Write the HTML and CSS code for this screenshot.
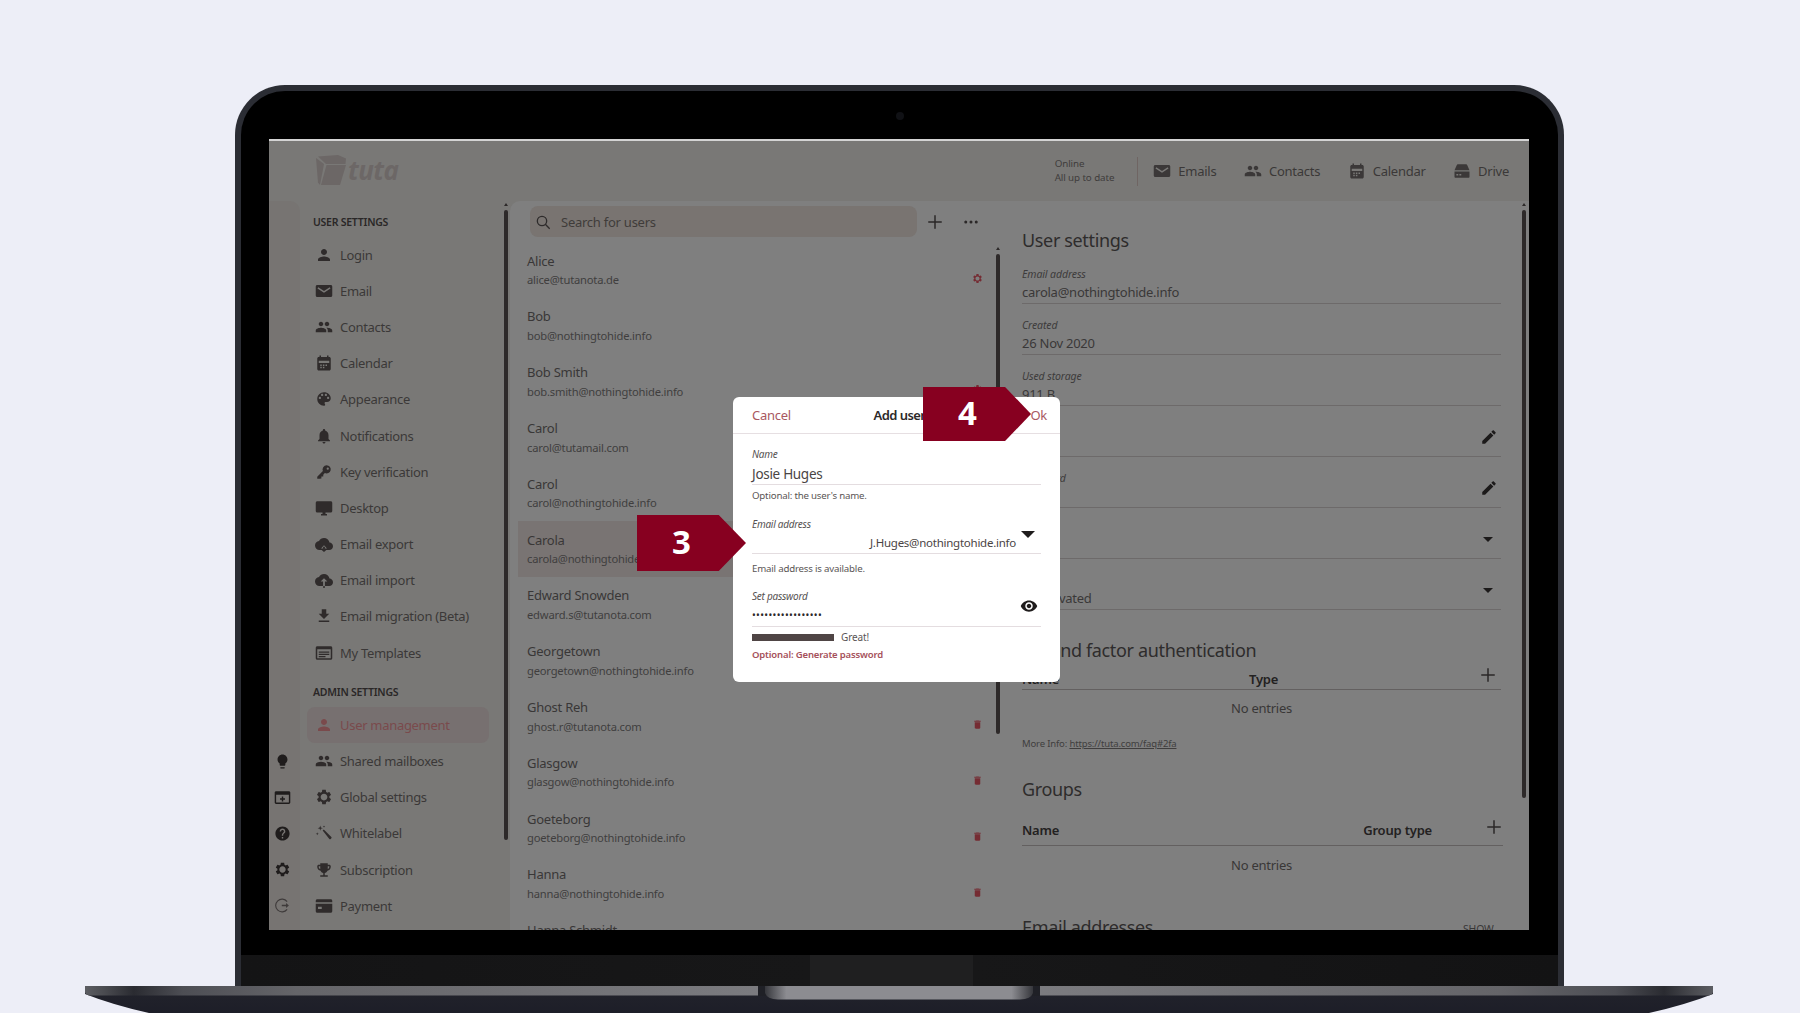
FILE: index.html
```html
<!DOCTYPE html>
<html lang="en">
<head>
<meta charset="utf-8">
<title>Tuta user settings</title>
<link rel="stylesheet" href="styles.css">
</head>
<body>
<svg class="sprites" width="0" height="0" aria-hidden="true">
  <symbol id="i-person" viewBox="0 0 24 24"><path d="M12 12c2.21 0 4-1.79 4-4s-1.79-4-4-4-4 1.79-4 4 1.79 4 4 4zm0 2c-2.67 0-8 1.34-8 4v2h16v-2c0-2.66-5.33-4-8-4z"/></symbol>
  <symbol id="i-mail" viewBox="0 0 24 24"><path fill-rule="evenodd" d="M3 4h18c1.1 0 2 .9 2 2v12c0 1.1-.9 2-2 2H3c-1.1 0-2-.9-2-2V6c0-1.1.9-2 2-2zm1.4 3L3.300 8.500 12 14.300l8.700-5.800L19.600 7 12 12z"/></symbol>
  <symbol id="i-people" viewBox="0 0 24 24"><path d="M16 11c1.66 0 2.99-1.34 2.99-3S17.66 5 16 5c-1.66 0-3 1.34-3 3s1.34 3 3 3zm-8 0c1.66 0 2.99-1.34 2.99-3S9.66 5 8 5C6.34 5 5 6.34 5 8s1.34 3 3 3zm0 2c-2.33 0-7 1.17-7 3.500V19h14v-2.500c0-2.330-4.670-3.500-7-3.500zm8 0c-.29 0-.62.02-.97.05 1.160.840 1.970 1.970 1.970 3.450V19h6v-2.500c0-2.330-4.670-3.500-7-3.500z"/></symbol>
  <symbol id="i-calendar" viewBox="0 0 24 24"><path fill-rule="evenodd" d="M6 2h2v2h8V2h2v2h1c1.100 0 2 .9 2 2v14c0 1.100-.9 2-2 2H5c-1.100 0-2-.9-2-2V6c0-1.100.9-2 2-2h1zM5 9v3h14V9zm2 5v2h2v-2zm3.500 0v2h2v-2zm3.500 0v2h2v-2zm-7 3v2h2v-2zm3.500 0v2h2v-2z"/></symbol>
  <symbol id="i-palette" viewBox="0 0 24 24"><path d="M12 3c-4.970 0-9 4.030-9 9s4.030 9 9 9c.83 0 1.500-.67 1.500-1.500 0-.39-.15-.74-.39-1.010-.23-.26-.38-.61-.38-.99 0-.83.67-1.500 1.500-1.500H16c2.760 0 5-2.240 5-5 0-4.420-4.030-8-9-8zm-5.500 9c-.83 0-1.500-.67-1.500-1.500S5.670 9 6.500 9 8 9.670 8 10.500 7.330 12 6.500 12zm3-4C8.670 8 8 7.330 8 6.500S8.670 5 9.500 5s1.500.67 1.500 1.500S10.330 8 9.500 8zm5 0c-.83 0-1.500-.67-1.500-1.500S13.670 5 14.500 5s1.500.67 1.500 1.500S15.330 8 14.500 8zm3 4c-.83 0-1.500-.67-1.500-1.500S16.670 9 17.500 9s1.500.67 1.500 1.500-.67 1.500-1.500 1.500z"/></symbol>
  <symbol id="i-bell" viewBox="0 0 24 24"><path d="M12 22c1.100 0 2-.9 2-2h-4c0 1.100.9 2 2 2zm6-6v-5c0-3.070-1.630-5.640-4.500-6.320V4c0-.83-.67-1.500-1.500-1.500s-1.500.67-1.500 1.500v.68C7.640 5.360 6 7.920 6 11v5l-2 2v1h16v-1l-2-2z"/></symbol>
  <symbol id="i-key" viewBox="0 0 24 24"><path fill-rule="evenodd" d="M15.500 3a5.500 5.500 0 1 1-2.400 10.450L11 15.500V18H8.500v2.500L6 21H3v-2.800l7.500-7.500A5.500 5.500 0 0 1 15.500 3zm1.500 3a1.500 1.500 0 1 0 0 3 1.500 1.500 0 0 0 0-3z"/></symbol>
  <symbol id="i-desktop" viewBox="0 0 24 24"><path d="M21 3H3c-1.100 0-2 .9-2 2v11c0 1.100.9 2 2 2h7v2H8v2h8v-2h-2v-2h7c1.100 0 2-.9 2-2V5c0-1.100-.9-2-2-2z"/></symbol>
  <symbol id="i-cloud-down" viewBox="0 0 24 24"><path d="M19.350 10.040C18.670 6.590 15.640 4 12 4 9.110 4 6.600 5.640 5.350 8.040 2.340 8.360 0 10.910 0 14c0 3.310 2.690 6 6 6h4.800v-2H8l4-4.500 4 4.500h-2.800v2H19c2.760 0 5-2.240 5-5 0-2.640-2.050-4.780-4.650-4.960z"/><path d="M10.800 15.500h2.400v4H15.500L12 22.500 8.500 19.500h2.300z"/></symbol>
  <symbol id="i-cloud-up" viewBox="0 0 24 24"><path d="M19.350 10.040C18.670 6.590 15.640 4 12 4 9.110 4 6.600 5.640 5.350 8.040 2.340 8.360 0 10.910 0 14c0 3.310 2.690 6 6 6h4.800v-6H7.500L12 9.500l4.500 4.500h-3.300v6H19c2.760 0 5-2.240 5-5 0-2.640-2.050-4.780-4.650-4.960z"/><path d="M11 20h2v2.500h-2z"/></symbol>
  <symbol id="i-download" viewBox="0 0 24 24"><path d="M19 9h-4V3H9v6H5l7 7 7-7zM5 18v2h14v-2H5z"/></symbol>
  <symbol id="i-templates" viewBox="0 0 24 24"><path d="M21 3H3c-1.100 0-2 .9-2 2v14c0 1.100.9 2 2 2h18c1.100 0 2-.9 2-2V5c0-1.100-.9-2-2-2zm0 16H3V7h18v12zM5 10h14v1.500H5zm0 3h14v1.500H5zm0 3h9v1.500H5z"/></symbol>
  <symbol id="i-gear" viewBox="0 0 24 24"><path d="M19.140 12.940c.04-.3.06-.61.06-.94 0-.32-.02-.64-.07-.94l2.030-1.580c.18-.14.23-.41.12-.61l-1.920-3.320c-.12-.22-.37-.29-.59-.22l-2.390.96c-.5-.38-1.030-.7-1.620-.94l-.36-2.540c-.04-.24-.24-.41-.48-.41h-3.840c-.24 0-.43.17-.47.41l-.36 2.540c-.59.24-1.130.57-1.620.94l-2.390-.96c-.22-.08-.47 0-.59.22L2.740 8.870c-.12.21-.08.47.12.61l2.030 1.580c-.05.3-.09.63-.09.94s.02.64.07.94l-2.030 1.580c-.18.14-.23.41-.12.61l1.920 3.320c.12.22.37.29.59.22l2.390-.96c.5.38 1.030.7 1.620.94l.36 2.540c.05.24.24.41.48.41h3.840c.24 0 .44-.17.47-.41l.36-2.540c.59-.24 1.130-.56 1.620-.94l2.390.96c.22.08.47 0 .59-.22l1.920-3.320c.12-.22.07-.47-.12-.61l-2.010-1.580zM12 16.500c-2.480 0-4.500-2.020-4.500-4.500s2.020-4.500 4.500-4.500 4.500 2.020 4.500 4.500-2.020 4.500-4.500 4.500z"/></symbol>
  <symbol id="i-wand" viewBox="0 0 24 24"><path d="M10.200 8.700l1.500-1.500 10.100 10.100c.5.5.5 1.300 0 1.800l-.9.9c-.5.5-1.300.5-1.800 0zM7 2l.8 2.700L10.500 5.500 7.800 6.300 7 9l-.8-2.700L3.500 5.500l2.700-.8zM3 11l.5 1.500L5 13l-1.500.5L3 15l-.5-1.500L1 13l1.500-.5zM12 2l.4 1.100 1.100.4-1.100.4L12 5l-.4-1.100-1.100-.4 1.100-.4z"/></symbol>
  <symbol id="i-trophy" viewBox="0 0 24 24"><path d="M19 5h-2V3H7v2H5c-1.100 0-2 .9-2 2v1c0 2.550 1.920 4.630 4.390 4.940.63 1.500 1.980 2.630 3.610 2.960V19H7v2h10v-2h-4v-3.100c1.630-.33 2.980-1.460 3.610-2.960C19.080 12.630 21 10.550 21 8V7c0-1.100-.9-2-2-2zM5 8V7h2v3.820C5.840 10.400 5 9.300 5 8zm14 0c0 1.300-.84 2.400-2 2.820V7h2v1z"/></symbol>
  <symbol id="i-card" viewBox="0 0 24 24"><path fill-rule="evenodd" d="M3 3h18c1.100 0 2 .9 2 2v2H1V5c0-1.100.9-2 2-2zM1 9h22v10c0 1.100-.9 2-2 2H3c-1.100 0-2-.9-2-2zm3 4v3h5v-3z"/></symbol>
  <symbol id="i-bulb" viewBox="0 0 24 24"><path d="M9 21c0 .55.45 1 1 1h4c.55 0 1-.45 1-1v-1H9v1zm3-19C8.140 2 5 5.140 5 9c0 2.380 1.190 4.470 3 5.740V17c0 .55.45 1 1 1h6c.55 0 1-.45 1-1v-2.260c1.810-1.270 3-3.360 3-5.740 0-3.860-3.140-7-7-7z"/></symbol>
  <symbol id="i-calplus" viewBox="0 0 24 24"><path fill-rule="evenodd" d="M3 3h18c1.100 0 2 .9 2 2v14c0 1.100-.9 2-2 2H3c-1.100 0-2-.9-2-2V5c0-1.100.9-2 2-2zm0 5v11h18V8zm8 2.500h2V13h2.500v2H13v2.500h-2V15H8.500v-2H11z"/></symbol>
  <symbol id="i-help" viewBox="0 0 24 24"><path d="M12 2C6.480 2 2 6.480 2 12s4.480 10 10 10 10-4.480 10-10S17.520 2 12 2zm1 17h-2v-2h2v2zm2.070-7.750l-.9.92C13.450 12.900 13 13.500 13 15h-2v-.5c0-1.100.45-2.100 1.170-2.830l1.240-1.260c.37-.36.59-.86.59-1.410 0-1.100-.9-2-2-2s-2 .9-2 2H8c0-2.210 1.790-4 4-4s4 1.790 4 4c0 .88-.36 1.680-.93 2.250z"/></symbol>
  <symbol id="i-logout" viewBox="0 0 24 24"><path fill="none" stroke="currentColor" stroke-width="1.600" d="M18.500 6.500A9 9 0 1 0 18.500 17.500"/><path d="M11 11h6V8.500l4 3.500-4 3.500V13h-6z"/></symbol>
  <symbol id="i-search" viewBox="0 0 24 24"><circle cx="10.500" cy="10.500" r="7" fill="none" stroke="currentColor" stroke-width="2"/><path fill="none" stroke="currentColor" stroke-width="2" d="M15.500 15.500L22 22"/></symbol>
  <symbol id="i-plus" viewBox="0 0 24 24"><path d="M11 3h2v8h8v2h-8v8h-2v-8H3v-2h8z"/></symbol>
  <symbol id="i-more" viewBox="0 0 24 24"><circle cx="5" cy="12" r="2"/><circle cx="12" cy="12" r="2"/><circle cx="19" cy="12" r="2"/></symbol>
  <symbol id="i-pencil" viewBox="0 0 24 24"><path d="M3 17.250V21h3.750L17.810 9.940l-3.750-3.750L3 17.250zM20.710 7.040c.39-.39.39-1.020 0-1.410l-2.340-2.340c-.39-.39-1.020-.39-1.410 0l-1.830 1.830 3.750 3.750 1.830-1.830z"/></symbol>
  <symbol id="i-eye" viewBox="0 0 24 24"><path d="M12 4.500C7 4.500 2.730 7.610 1 12c1.730 4.390 6 7.500 11 7.500s9.270-3.110 11-7.500c-1.730-4.390-6-7.500-11-7.500zM12 17c-2.760 0-5-2.240-5-5s2.240-5 5-5 5 2.240 5 5-2.240 5-5 5zm0-8c-1.660 0-3 1.340-3 3s1.340 3 3 3 3-1.340 3-3-1.340-3-3-3z"/></symbol>
  <symbol id="i-trash" viewBox="0 0 24 24"><path d="M6 19c0 1.100.9 2 2 2h8c1.100 0 2-.9 2-2V7H6v12zM19 4h-3.500l-1-1h-5l-1 1H5v2h14V4z"/></symbol>
  <symbol id="i-drive" viewBox="0 0 24 24"><path fill-rule="evenodd" d="M7 3h10c1 0 1.800.6 2.200 1.500L22 11H2l2.800-6.500C5.200 3.600 6 3 7 3zM2 12.500h20V20c0 .6-.4 1-1 1H3c-.6 0-1-.4-1-1zm2.500 3.500v2H7v-2zm4 0v2H11v-2z"/></symbol>
</svg>

<main class="stage">
  <section class="lid">
    <div class="camera"></div>
    <div class="bezel">
      <div class="screen">
        <header class="topbar">
          <div class="logo">
            <svg class="logo-mark" viewBox="0 0 30 30" aria-hidden="true"><path d="M2 1.500L22 0l8 3.500-.5 5.500H10z"/><path d="M10.500 10H30l-6 20H5z"/><path d="M0 3l8 6-4 21-2-2.500z"/></svg>
            <span class="logo-text">tuta</span>
          </div>
          <div class="status"><span>Online</span><span>All up to date</span></div>
          <nav class="apps">
            <a class="app"><svg class="ic"><use href="#i-mail"/></svg>Emails</a>
            <a class="app"><svg class="ic"><use href="#i-people"/></svg>Contacts</a>
            <a class="app"><svg class="ic"><use href="#i-calendar"/></svg>Calendar</a>
            <a class="app"><svg class="ic"><use href="#i-drive"/></svg>Drive</a>
          </nav>
        </header>

        <div class="workspace">
          <aside class="rail">
            <svg class="ic rail-ic"><use href="#i-bulb"/></svg>
            <svg class="ic rail-ic"><use href="#i-calplus"/></svg>
            <svg class="ic rail-ic"><use href="#i-help"/></svg>
            <svg class="ic rail-ic"><use href="#i-gear"/></svg>
            <svg class="ic rail-ic rail-faint"><use href="#i-logout"/></svg>
          </aside>

          <nav class="sidenav">
            <h4 class="nav-title">USER SETTINGS</h4>
            <a class="nav-item"><svg class="ic"><use href="#i-person"/></svg>Login</a>
            <a class="nav-item"><svg class="ic"><use href="#i-mail"/></svg>Email</a>
            <a class="nav-item"><svg class="ic"><use href="#i-people"/></svg>Contacts</a>
            <a class="nav-item"><svg class="ic"><use href="#i-calendar"/></svg>Calendar</a>
            <a class="nav-item"><svg class="ic"><use href="#i-palette"/></svg>Appearance</a>
            <a class="nav-item"><svg class="ic"><use href="#i-bell"/></svg>Notifications</a>
            <a class="nav-item"><svg class="ic"><use href="#i-key"/></svg>Key verification</a>
            <a class="nav-item"><svg class="ic"><use href="#i-desktop"/></svg>Desktop</a>
            <a class="nav-item"><svg class="ic"><use href="#i-cloud-down"/></svg>Email export</a>
            <a class="nav-item"><svg class="ic"><use href="#i-cloud-up"/></svg>Email import</a>
            <a class="nav-item"><svg class="ic"><use href="#i-download"/></svg>Email migration (Beta)</a>
            <a class="nav-item"><svg class="ic"><use href="#i-templates"/></svg>My Templates</a>
            <h4 class="nav-title nav-title-admin">ADMIN SETTINGS</h4>
            <a class="nav-item nav-active"><svg class="ic"><use href="#i-person"/></svg>User management</a>
            <a class="nav-item"><svg class="ic"><use href="#i-people"/></svg>Shared mailboxes</a>
            <a class="nav-item"><svg class="ic"><use href="#i-gear"/></svg>Global settings</a>
            <a class="nav-item"><svg class="ic"><use href="#i-wand"/></svg>Whitelabel</a>
            <a class="nav-item"><svg class="ic"><use href="#i-trophy"/></svg>Subscription</a>
            <a class="nav-item"><svg class="ic"><use href="#i-card"/></svg>Payment</a>
            <div class="scroll scroll-nav"></div>
          </nav>

          <div class="content">
            <section class="users">
              <div class="users-tools">
                <div class="search"><svg class="ic search-ic"><use href="#i-search"/></svg>Search for users</div>
                <svg class="ic tool-ic"><use href="#i-plus"/></svg>
                <svg class="ic tool-ic"><use href="#i-more"/></svg>
              </div>
              <ul class="user-list">
                <li class="user"><div><b>Alice</b><span>alice@tutanota.de</span></div><svg class="ic flag"><use href="#i-gear"/></svg></li>
                <li class="user"><div><b>Bob</b><span>bob@nothingtohide.info</span></div></li>
                <li class="user"><div><b>Bob Smith</b><span>bob.smith@nothingtohide.info</span></div><svg class="ic flag"><use href="#i-gear"/></svg></li>
                <li class="user"><div><b>Carol</b><span>carol@tutamail.com</span></div></li>
                <li class="user"><div><b>Carol</b><span>carol@nothingtohide.info</span></div></li>
                <li class="user user-selected"><div><b>Carola</b><span>carola@nothingtohide.info</span></div></li>
                <li class="user"><div><b>Edward Snowden</b><span>edward.s@tutanota.com</span></div></li>
                <li class="user"><div><b>Georgetown</b><span>georgetown@nothingtohide.info</span></div></li>
                <li class="user"><div><b>Ghost Reh</b><span>ghost.r@tutanota.com</span></div><svg class="ic flag"><use href="#i-trash"/></svg></li>
                <li class="user"><div><b>Glasgow</b><span>glasgow@nothingtohide.info</span></div><svg class="ic flag"><use href="#i-trash"/></svg></li>
                <li class="user"><div><b>Goeteborg</b><span>goeteborg@nothingtohide.info</span></div><svg class="ic flag"><use href="#i-trash"/></svg></li>
                <li class="user"><div><b>Hanna</b><span>hanna@nothingtohide.info</span></div><svg class="ic flag"><use href="#i-trash"/></svg></li>
                <li class="user"><div><b>Hanna Schmidt</b><span>hanna.s@nothingtohide.info</span></div></li>
              </ul>
              <div class="scroll scroll-list"></div>
            </section>

            <section class="detail">
              <h2 class="detail-title title-first">User settings</h2>
              <div class="field"><label>Email address</label><p>carola@nothingtohide.info</p></div>
              <div class="field"><label>Created</label><p>26 Nov 2020</p></div>
              <div class="field"><label>Used storage</label><p>911 B</p></div>
              <div class="field"><label>Name</label><p>Carola</p><svg class="ic field-ic"><use href="#i-pencil"/></svg></div>
              <div class="field"><label>Password</label><p>***</p><svg class="ic field-ic"><use href="#i-pencil"/></svg></div>
              <div class="field"><label>Admin</label><p>No</p><span class="field-caret"></span></div>
              <div class="field"><label>State</label><p>Deactivated</p><span class="field-caret"></span></div>
              <h2 class="detail-title title-2fa">Second factor authentication</h2>
              <div class="thead thead-2fa"><b>Name</b><b class="col-type">Type</b><svg class="ic thead-plus"><use href="#i-plus"/></svg></div>
              <p class="empty">No entries</p>
              <p class="more-info">More Info: <a>https://tuta.com/faq#2fa</a></p>
              <h2 class="detail-title title-groups">Groups</h2>
              <div class="thead thead-groups"><b>Name</b><b class="col-group">Group type</b><svg class="ic thead-plus"><use href="#i-plus"/></svg></div>
              <p class="empty empty-groups">No entries</p>
              <div class="collapsed"><h2 class="detail-title">Email addresses</h2><span>SHOW –</span></div>
              <div class="scroll scroll-detail"></div>
            </section>
          </div>
        </div>

        <div class="dialog">
          <div class="dialog-head"><a class="link">Cancel</a><strong>Add user</strong><a class="link ok">Ok</a></div>
          <div class="dialog-body">
            <div class="dfield">
              <label>Name</label>
              <p class="dvalue">Josie Huges</p>
              <small>Optional: the user's name.</small>
            </div>
            <div class="dfield dfield-mail">
              <label>Email address</label>
              <div class="dvalue dvalue-mail">J.Huges@nothingtohide.info<span class="dcaret"></span></div>
              <small>Email address is available.</small>
            </div>
            <div class="dfield dfield-pass">
              <label>Set password</label>
              <div class="dvalue dvalue-pass"><span class="dots">•••••••••••••••••</span><svg class="ic eye"><use href="#i-eye"/></svg></div>
              <div class="strength"><i></i>Great!</div>
              <a class="generate">Optional: Generate password</a>
            </div>
          </div>
        </div>

        <div class="callout callout-3">3</div>
        <div class="callout callout-4">4</div>
      </div>
    </div>
    <div class="chin"></div>
  </section>

  <svg class="base" viewBox="0 0 1628 27" aria-hidden="true">
    <defs>
      <linearGradient id="baseBody" x1="0" x2="0" y1="0" y2="1"><stop offset="0" stop-color="#23242c"/><stop offset="1" stop-color="#1d1e28"/></linearGradient>
      <linearGradient id="baseBand" x1="0" x2="1" y1="0" y2="0">
        <stop offset="0" stop-color="#5c5d62"/><stop offset=".012" stop-color="#4a4b50"/><stop offset=".03" stop-color="#2a2b31"/><stop offset=".06" stop-color="#4d4e54"/><stop offset=".13" stop-color="#656569"/><stop offset=".5" stop-color="#828286"/><stop offset=".87" stop-color="#656569"/><stop offset=".94" stop-color="#4d4e54"/><stop offset=".97" stop-color="#2a2b31"/><stop offset=".988" stop-color="#4a4b50"/><stop offset="1" stop-color="#5c5d62"/>
      </linearGradient>
      <linearGradient id="baseNotch" x1="0" x2="1" y1="0" y2="0"><stop offset="0" stop-color="#36373c"/><stop offset=".08" stop-color="#8c8c91"/><stop offset=".92" stop-color="#8c8c91"/><stop offset="1" stop-color="#36373c"/></linearGradient>
    </defs>
    <path d="M0 0H1628V8Q1600 19 1564 27H64Q28 19 0 8Z" fill="url(#baseBody)"/>
    <path d="M0 0H1628V6Q1628 8 1624 9.500H4Q0 8 0 6Z" fill="url(#baseBand)"/>
    <rect x="673" y="0" width="282" height="10" fill="#1f2026"/>
    <path d="M680 0H948V7Q946 13 935 13.500H693Q682 13 680 7Z" fill="url(#baseNotch)"/>
  </svg>
</main>
</body>
</html>
```
FILE: styles.css
```css
* { box-sizing: border-box; }
html, body { margin: 0; padding: 0; }
body { background: #edeef7; font-family: "Noto Sans", "Open Sans", sans-serif; overflow: hidden; }
h2, h4, p, ul { margin: 0; padding: 0; font-weight: 400; }
ul { list-style: none; }
a { color: inherit; }
.sprites { position: absolute; }
.ic { width: 18px; height: 18px; fill: currentColor; flex: none; display: block; }

.stage { width: 1800px; height: 1013px; padding: 85px 0 0 235px; display: flex; flex-direction: column; align-items: flex-start; overflow: hidden; }

/* laptop */
.lid { position: relative; width: 1329px; height: 901px; flex: none; display: flex; flex-direction: column; background: #000; border: 6px solid #2b2d34; border-bottom: 0; border-radius: 50px 50px 12px 12px / 50px 50px 0 0; overflow: hidden; }
.camera { position: absolute; left: 655px; top: 21px; width: 8px; height: 8px; border-radius: 50%; background: #101115; }
.bezel { flex: 1; min-height: 0; padding: 48px 29px 25px 28px; }
.chin { height: 31px; flex: none; background: linear-gradient(90deg, #141415 0, #171718 43.200%, #1f1f20 43.200%, #1f1f20 55.600%, #171718 55.600%, #131314 100%); }
.base { display: block; width: 1628px; height: 27px; flex: none; margin-left: -150px; }

/* screen */
.screen { position: relative; height: 791px; display: flex; flex-direction: column; overflow: hidden; background: #797876; border-top: 2px solid #d4d4d4; color: #3b3838; font-size: 13px; letter-spacing: -.25px; }
.topbar { height: 60px; flex: none; display: flex; align-items: center; padding: 0 20px 0 47px; }
.logo { display: flex; align-items: center; gap: 2px; color: #6c6766; }
.logo-mark { width: 30px; height: 30px; fill: currentColor; margin-top: -2px; }
.logo-text { font: italic 700 26px/30px "Open Sans", sans-serif; letter-spacing: -.5px; margin-top: -2px; }
.status { margin-left: auto; display: flex; flex-direction: column; font-size: 9.800px; line-height: 14.500px; padding-right: 23px; border-right: 1px solid #6f6563; color: #3f3c3c; letter-spacing: -.1px; }
.apps { display: flex; align-items: center; margin-left: 15px; gap: 27.500px; }
.app { display: flex; align-items: center; gap: 7px; }

.workspace { flex: 1; min-height: 0; display: flex; }
.rail { width: 31px; flex: none; display: flex; flex-direction: column; justify-content: flex-end; align-items: center; padding: 0 4px 6px 0; background: #777472; border-radius: 0 10px 0 0; color: #1f1c1c; }
.rail-ic { width: 17px; height: 17px; margin: 9.600px 0; }
.rail-faint { color: #3f3b3b; }

.sidenav { position: relative; width: 210px; flex: none; padding-left: 7px; display: flex; flex-direction: column; }
.nav-title { padding: 13.500px 0 7px 6px; font-size: 10.500px; line-height: 15px; font-weight: 600; color: #2a2727; letter-spacing: -.25px; }
.nav-title-admin { padding-top: 14px; }
.nav-item { width: 182px; height: 36.200px; flex: none; display: flex; align-items: center; gap: 7px; padding-left: 8px; border-radius: 8px; color: #3b3838; letter-spacing: -.3px; }
.nav-item .ic { color: #2f2b2b; }
.nav-active { background: #777070; color: #7a4a4c; }
.nav-active .ic { color: #7a4a4c; }

.scroll { position: absolute; width: 4px; background: #2d2929; border-radius: 2px; }
.scroll::before { content: ""; position: absolute; top: -7px; left: 0; border: 2px solid transparent; border-bottom: 3px solid #2d2929; border-top: 0; }
.scroll-nav { left: 204px; top: 9px; height: 630px; }
.scroll-list { left: 486px; top: 53px; height: 480px; }
.scroll-detail { left: 510px; top: 9px; height: 588px; }

.content { flex: 1; min-width: 0; display: flex; background: #7f7f7f; border-radius: 10px 0 0 0; }
.users { position: relative; width: 502px; flex: none; display: flex; flex-direction: column; overflow: hidden; }
.users-tools { display: flex; align-items: center; padding: 5px 0 0 20px; gap: 9px; }
.search { width: 387px; height: 31px; display: flex; align-items: center; gap: 10px; padding-left: 5px; background: #797471; border-radius: 8px; color: #403c3a; }
.search-ic { width: 16px; height: 16px; color: #2e2b2b; }
.tool-ic { width: 18px; height: 18px; color: #2b2828; margin-right: 9px; }
.user-list { margin-top: 5.500px; }
.user { height: 55.800px; display: flex; align-items: center; justify-content: space-between; margin-left: 8px; padding: 0 29px 0 9px; }
.user b { display: block; font-weight: 400; font-size: 13px; line-height: 18.500px; color: #393737; letter-spacing: -.25px; }
.user span { display: block; font-size: 11.200px; line-height: 19px; color: #403e3e; letter-spacing: -.2px; }
.user-selected { background: #797473; }
.flag { width: 11px; height: 11px; color: #752c33; margin-top: 16px; }

.detail { position: relative; flex: 1; min-width: 0; padding: 0 28px 0 10px; overflow: hidden; }
.detail-title { font-size: 18px; line-height: 24px; color: #2e2c2c; letter-spacing: -.35px; }
.title-first { padding-top: 27px; margin-bottom: 1px; }
.field { display: grid; grid-template-columns: 1fr auto; padding-top: 13px; border-bottom: 1px solid #6d6a6a; height: 51px; }
.field label { grid-column: 1; font-style: italic; font-size: 10.500px; line-height: 16px; color: #3d3b3b; letter-spacing: -.1px; }
.field p { grid-column: 1; font-size: 13px; line-height: 21px; color: #3a3838; }
.field-ic { grid-column: 2; grid-row: 1 / span 2; align-self: end; margin: 0 3px 10px 0; color: #1c1a1a; }
.field-caret { grid-column: 2; grid-row: 1 / span 2; align-self: end; margin: 0 8px 16px 0; border: 5px solid transparent; border-top: 5px solid #1c1a1a; border-bottom: 0; }
.title-2fa { padding-top: 28px; }
.thead { display: grid; align-items: end; font-size: 13px; line-height: 20px; color: #232121; border-bottom: 1px solid #636060; }
.thead b { font-weight: 600; letter-spacing: -.2px; }
.thead-2fa { grid-template-columns: 227px 1fr 18px; padding: 7px 4px 0 0; }
.thead-groups { grid-template-columns: 1fr auto 18px; column-gap: 53px; margin-top: 19px; padding-bottom: 5px; margin-right: -2px; }
.thead-plus { color: #2b2828; }
.thead-2fa .thead-plus { margin: -3px 0 5px; }
.thead-groups .thead-plus { margin: -2px 0 4px; }
.empty { text-align: center; font-size: 13px; line-height: 20px; margin-top: 7.500px; color: #393737; }
.empty-groups { margin-top: 8.500px; }
.more-info { margin-top: 18px; font-size: 9.500px; line-height: 16px; color: #403e3e; letter-spacing: -.15px; }
.more-info a { text-decoration: underline; }
.title-groups { padding-top: 25.700px; }
.collapsed { display: flex; justify-content: space-between; align-items: flex-end; margin-top: 40px; }
.collapsed span { font-size: 10.500px; line-height: 14px; margin-bottom: 3px; color: #393737; }

/* dialog */
.dialog { position: absolute; left: 464px; top: 256px; width: 327px; height: 285px; background: #fff; border-radius: 6px; color: #4a4444; display: flex; flex-direction: column; }
.dialog-head { height: 37px; flex: none; display: grid; grid-template-columns: 1fr auto 1fr; align-items: center; padding: 0 13px 0 19px; border-bottom: 1px solid #e6dfe2; font-size: 13px; }
.dialog-head strong { color: #2c2929; font-weight: 600; letter-spacing: -.55px; }
.link { color: #a9585f; }
.ok { justify-self: end; }
.dialog-body { padding: 13px 19px 0; display: flex; flex-direction: column; }
.dfield label { display: block; font-style: italic; font-size: 10px; line-height: 14px; color: #565252; }
.dfield small { display: block; margin-top: 4px; font-size: 9.700px; line-height: 14px; color: #5a5555; letter-spacing: -.2px; }
.dvalue { margin: 3px 0 0; height: 21px; line-height: 20px; font-size: 13.500px; border-bottom: 1px solid #e4dde0; color: #4a4444; letter-spacing: -.3px; }
.dfield-mail { margin-top: 14px; }
.dvalue-mail { display: flex; justify-content: flex-end; align-items: center; font-size: 11.500px; padding-right: 25px; position: relative; height: 21px; margin-top: 2px; color: #4a4444; letter-spacing: -.25px; }
.dfield-mail small { margin-top: 8px; }
.dcaret { position: absolute; right: 6px; top: -2px; border: 7px solid transparent; border-top: 7px solid #1f1c1c; border-bottom: 0; }
.dfield-pass { margin-top: 13px; }
.dvalue-pass { position: relative; font-size: 10px; letter-spacing: .36px; height: 22px; margin-top: 2px; }
.dots { color: #2c2929; }
.eye { position: absolute; right: 3px; top: -8px; color: #1f1c1c; }
.strength { display: flex; align-items: center; gap: 7px; font-size: 10px; line-height: 14px; margin-top: 3px; color: #5a5555; letter-spacing: -.1px; }
.strength i { width: 82px; height: 7px; background: #4f4545; display: block; }
.generate { display: block; margin-top: 3.500px; font-size: 9.500px; line-height: 14px; font-weight: 600; color: #a5505a; letter-spacing: -.15px; }

/* annotation callouts */
.callout { position: absolute; display: flex; align-items: center; background: #870020; color: #fff; font: 700 33px/1 "Open Sans", sans-serif; letter-spacing: 0; padding-bottom: 4px; }
.callout-3 { left: 368px; top: 374px; width: 109px; height: 56px; padding-left: 35px; clip-path: polygon(0 0, 75% 0, 100% 50%, 75% 100%, 0 100%); }
.callout-4 { left: 654px; top: 246px; width: 108px; height: 54px; padding-left: 35px; clip-path: polygon(0 0, 76% 0, 100% 50%, 76% 100%, 0 100%); }
```
